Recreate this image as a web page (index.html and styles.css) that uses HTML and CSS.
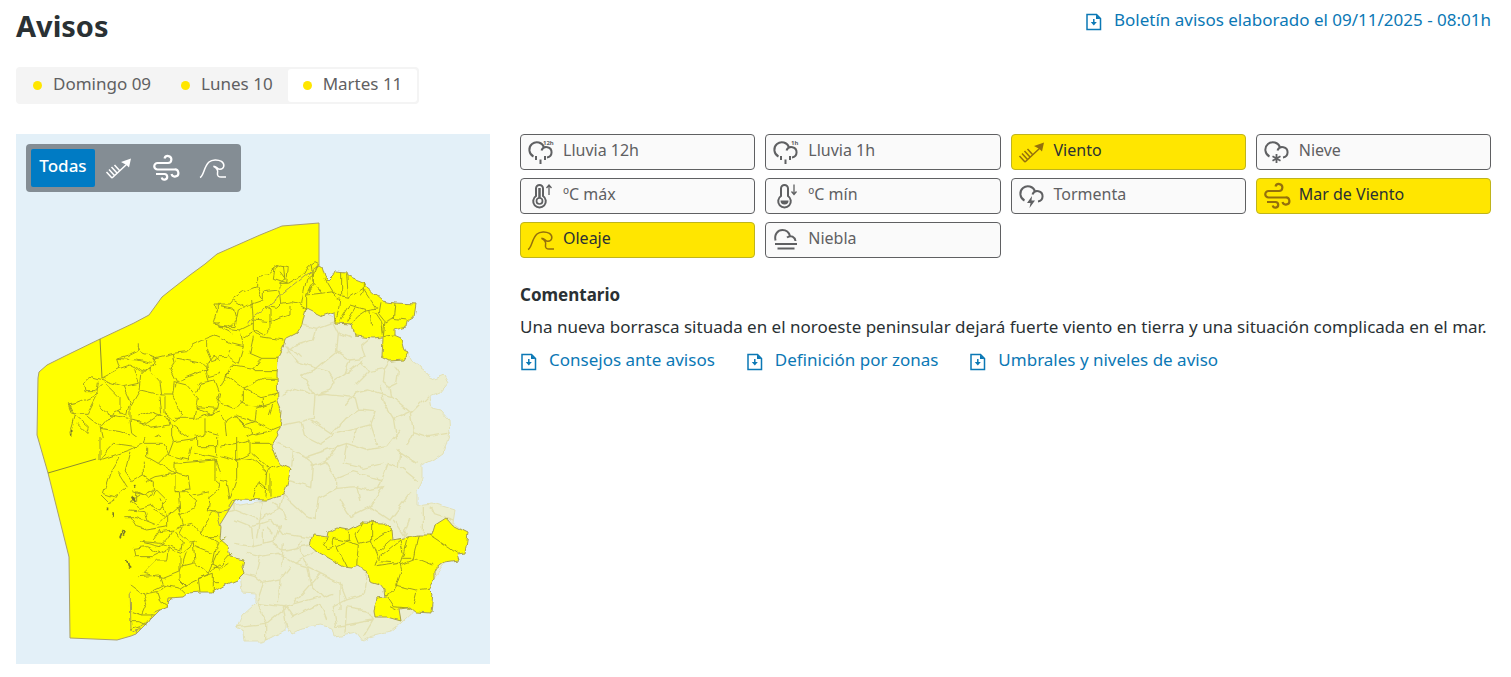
FILE: index.html
```html
<!DOCTYPE html>
<html lang="es">
<head>
<meta charset="utf-8">
<meta name="viewport" content="width=device-width, initial-scale=1">
<title>Avisos</title>
<link rel="stylesheet" href="styles.css">
</head>
<body>
<svg class="sprite" aria-hidden="true">
  <symbol id="i-doc" viewBox="0 0 18 18"><path d="M2 1.500h9.500l4 4v11H2z" fill="none" stroke="currentColor" stroke-width="1.500"/><path d="M11 1.500v4.500h4.500z" fill="currentColor"/><path d="M8.800 6v4" stroke="currentColor" stroke-width="1.500"/><path d="M5.800 9h6l-3 3.500z" fill="currentColor"/></symbol>
  <symbol id="i-cloud" viewBox="0 0 28 28"><path d="M6.500 18.500A7.500 7.500 0 1 1 17 9.500M14.500 12.500A5.200 5.200 0 1 1 20 19.500" fill="none" stroke="currentColor" stroke-width="2"/></symbol>
  <symbol id="i-rain" viewBox="0 0 28 28"><use href="#i-cloud"/><path d="M9 18v4M13.500 21.500v4.500M18 18v4" stroke="currentColor" stroke-width="2"/></symbol>
  <symbol id="i-snow" viewBox="0 0 28 28"><use href="#i-cloud"/><path d="M13.500 16v9M9.500 18.300l8 4.400M17.500 18.300l-8 4.400" stroke="currentColor" stroke-width="1.800"/></symbol>
  <symbol id="i-storm" viewBox="0 0 28 28"><use href="#i-cloud"/><path d="M14 14l-5 7h3.500l-1 5 5.500-7.500h-3.500z" fill="currentColor"/></symbol>
  <symbol id="i-tmax" viewBox="0 0 28 28"><path d="M9 14V6.500a3.500 3.500 0 0 1 7 0V14a6.300 6.300 0 1 1-7 0z" fill="none" stroke="currentColor" stroke-width="2"/><circle cx="12.500" cy="19" r="3" fill="none" stroke="currentColor" stroke-width="1.700"/><path d="M12.500 6v10" stroke="currentColor" stroke-width="2.500"/><path d="M22 13V3.500M19.500 6l2.500-3L24.500 6" fill="none" stroke="currentColor" stroke-width="1.300"/></symbol>
  <symbol id="i-tmin" viewBox="0 0 28 28"><path d="M9 14V6.500a3.500 3.500 0 0 1 7 0V14a6.300 6.300 0 1 1-7 0z" fill="none" stroke="currentColor" stroke-width="2"/><path d="M8.500 18.500h8a4 4 0 0 1-8 0z" fill="currentColor"/><path d="M22 2.500V12M19.500 9.500l2.500 3L24.500 9.500" fill="none" stroke="currentColor" stroke-width="1.300"/></symbol>
  <symbol id="i-fog" viewBox="0 0 28 28"><path d="M3.500 14.500C2 8 6 4 10.500 4c3.500 0 6.500 2.500 7.500 6M15 11.500c4-3 8-.5 8.500 3.500" fill="none" stroke="currentColor" stroke-width="2"/><path d="M3 18h22M5.500 22.500h17" stroke="currentColor" stroke-width="2"/></symbol>
  <symbol id="i-wind" viewBox="0 0 28 28"><path d="M7 24L22 10M7 24l-5.500-6M9.500 21.500L4 15.500M12 19l-5.500-6M14.500 16.500L9.500 11" fill="none" stroke="currentColor" stroke-width="1.500"/><path d="M26 4.500l-2 9-2.500-2.500-5.500-3z" fill="currentColor"/></symbol>
  <symbol id="i-sea" viewBox="0 0 28 28"><path d="M12.500 4.500a3.500 3.500 0 1 1 3.500 4.500H5.500a3 3 0 0 0 0 6.500H22.500a3.500 3.500 0 1 1-3 4.500M4 20h8.500a2.800 2.800 0 1 1-2.800 3.500" fill="none" stroke="currentColor" stroke-width="2.200"/></symbol>
  <symbol id="i-wave" viewBox="0 0 28 28"><path d="M1 23.500C5 22 4.500 13 10 8c3-2.700 9-2.700 12.500-.7 4 3 2.500 8-1.500 8-3 0-3-3-6.500-3 3 1.500 5 3.500 4 7-.5 3 1.500 3.700 3.500 3.700h5" fill="none" stroke="currentColor" stroke-width="1.500"/></symbol>
</svg>

<header class="page-head">
  <h1>Avisos</h1>
  <a class="doc-link" href="#boletin"><svg aria-hidden="true"><use href="#i-doc"/></svg>Boletín avisos elaborado el 09/11/2025 - 08:01h</a>
</header>

<nav class="days" aria-label="Días">
  <button type="button"><i class="dot"></i>Domingo 09</button>
  <button type="button"><i class="dot"></i>Lunes 10</button>
  <button type="button" class="active" aria-pressed="true"><i class="dot"></i>Martes 11</button>
</nav>

<main class="content">
  <section class="map" aria-label="Mapa de avisos">
    <svg class="map-drawing" viewBox="16 134 474 530" role="img" aria-label="Mapa de Galicia">
      <defs>
        <filter id="rough" x="-5%" y="-5%" width="110%" height="110%"><feTurbulence type="fractalNoise" baseFrequency=".13" numOctaves="1" seed="4"/><feDisplacementMap in="SourceGraphic" scale="6" xChannelSelector="R" yChannelSelector="G"/></filter>
        <clipPath id="nw"><path d="M0 0H600V666H0z"/></clipPath>
        <clipPath id="ne"><path d="M60 0H810V666H60z"/></clipPath>
        <clipPath id="sw"><path d="M0 21H600V690H0z"/></clipPath>
        <clipPath id="se"><path d="M60 21H870V690H60z"/></clipPath>
      </defs>
      <g filter="url(#rough)">
        <path class="land" d="M308 305L340 320 408 352 412 362 427 372 432 380 445 375 449 382 440 393 430 397 432 408 440 410 449 420 450 435 450 433 443 453 433 460 422 465 422 478 417 490 417 505 433 503 455 510 453 523 467 533 440 570 428 589 425 600 401 623 390 632 370 637 363 641 357 633 335 637 333 628 320 625 303 628 292 634 285 622 285 630 272 637 262 642 245 642 244 632 237 627 242 615 255 603 255 593 242 592 240 575 215 540 210 510 270 500 270 370 285 330z"/>
        <g class="beige" transform="translate(200 215) scale(.3333)"><path d="M305 330l45 10 55-20M350 340l-10 35-50 15-30 25M400 325l15 30 40 15M415 355l-5 55-60 50-60-20-30-40 30 10 15 15M410 410l40 25 45-5-10-40 35-30M350 460l-45 20 20 30 20 30 45-15 15-25-20-30-35-10M450 435l-15 40-30 20M435 475l50-35 20 30-40 40M505 470l50-10 20-30M555 460l-5 40 20 15 20-10 5-35-15-20M570 515l5 30 60 50 50-50M575 545l-70-20-40 10-30 35M245 540l40-20 60 20M345 540l-5 70-40 10-50 10M345 540l30-5 90 10 10 40-40 25-40 45-60-40M475 585l50 5-15 40-40 10-10 40M510 630l20 60M540 510l10 50 30 50 50-20M580 610l10 60M630 590l10 60 45 15 60-10M640 650l-20 40M300 620l10 40 50 25 45-30M410 655l60-15"/></g>
        <g class="beige" transform="translate(200 430) scale(.3333)"><path d="M230 40l50 20 40 20 60-20 60-20 60 20 60-10 40-50M280 60l-5 50M320 80l20 30-5 60-75-20M335 110l40-15 35 50 0 30-55 30-10 65M375 95l40-50M440 40l-10 60 60 15 60-15M410 145l50-20 85 25 20-50 30 10 5-50M410 175l60-5 30 10 50-10-40 60-60 30-30-50M470 165l10 50M545 150l-10 25M510 230l60 40 60-80M600 110l50 40M590 60l60 40M350 270l-30-10-70-65M250 195l-10 40-60 30-10 60M60 250l45-10 75 30M105 240l0-30M105 270l50 20 60-20 30 40 90 15M155 290l5 60-60-10M180 265l10-50M160 350l60-15 20-50M215 340l40 20 75-15M140 370l40 10 55-10 50 30 65-40M180 380l-15 60 25 20 50-10 30-40M130 430l35 10M240 450l-5 70M285 400l35 10 10 50M320 410l40 20 60 30 0 80M360 430l-80 90M420 460l20 50 50-15 10-70M440 510l-40 20 10 60M330 460l40 40 30-10M190 460l-20 60 80 10 110-30M200 580l60-50 20 30 80-40 20 50M170 520l30 60 0 50M250 530l10 60M110 590l90-10M440 530l-5 80M440 530l60 10 20 30-30 50M410 590l110-20M580 270l30 45 20-50M600 330l20-20M670 230l0 80M690 230l10 20 60 20M310 330l-30 30M190 300l0 40M220 220l30 20 10 30M200 290l20 20M250 340l-5 70M300 355l20 50"/></g>
      </g>
      <path class="sea" d="M319 223L282 226 260 235 217 254 205 264 190 275 172 289 162 297 149 315 134 323 100 339 63 357 47 365 39 372 38 378 37 435 48 473 69 557 70 638 117 640 131 636 136 634 180 590 235 500 260 360 306 310 319 265z"/>
      <g filter="url(#rough)">
        <path class="warn" d="M319 265L322 267 325 277 328 280 333 275 335 271 347 272 348 276 363 282 367 288 382 301 395 303 416 304 414 317 407 321 406 327 394 330 394 335 401 338 404 350 408 352 403 360 390 361 382 357 383 337 373 338 355 336 352 324 335 323 334 312 322 316 306 308 302 325 297 333 285 339 283 348 278 358 277 375 278 402 282 412 280 428 277 432 278 435 272 445 277 458 280 464 291 469 286 488 283 495 267 500 240 499 232 502 227 510 217 512 221 527 220 540 228 547 230 557 244 560 242 567 244 573 237 580 225 585 213 592 200 592 188 593 183 597 168 598 167 607 153 613 147 622 137 630 136 634 131 631 130 585 140 578 158 570 150 500 250 320z"/>
        <path class="mask" d="M140 560L150 500 245 330 250 340 170 560 133 583z"/>
        <path class="warn" d="M310 545L313 535 328 537 329 532 337 528 348 530 363 522 383 523 392 530 393 540 408 537 418 535 432 535 435 525 446 518 452 525 468 533 465 553 457 554 459 560 445 562 435 570 435 578 428 589 433 594 431 613 417 612 411 607 399 609 401 621 387 617 375 617 374 610 377 598 385 597 384 590 380 585 370 582 367 570 357 565 352 567 343 566 318 552z"/>
        <g class="lines" transform="translate(20 215) scale(.3333)"><path clip-path="url(#nw)" d="M355 385l0 20-30 15-35 10 10 30 30-10 40 20 30-20 5-25-35-10-15-20M400 430l60-15 40-5 20-20 40-20 25-10 25 10 5 30-10 30-30 10-15-35 0-30M290 430l60 5 45 10M460 415l5 25-15 20 20 40 75-30 20-5-20-20-75-15M385 460l35 40 5 40-65-15 5-45 25-25M340 460l15 45-45 10-60-20-35-10-25 20 5 25 30 0 20-20M245 490l55-30M235 500l-5 40-60 25-25 5 10 25 50 0 30-60M250 500l50 50 0 35-30 15-35-30M310 515l20 45-10 40-30-10M360 525l-30 50 0 40 50 10 45-30-5-50M330 615l5 40 40 30 40-25 40 30M145 565l20 40-15 50 5 30M165 600l40 35-5 20-30-30M200 600l45 35 30-35 50 10M240 635l10 45M355 600l35-10 55 20 5 20-60 10-30-20M425 540l30 0 30 60-20 20-30-25 0-50M455 540l5-40 40 10 35 40-10 60-60 0M530 530l10-25 45-10 15 40-10 45-55-5M470 500l-5 15M555 470l10 30M585 420l-25 30 5 35 35-10 10-25-30-30M600 470l30-20 15 40-35 20-10-35M610 510l55 10 5 60-35 5-45-30 5-20M595 285l0-20 10 0M580 325l50-5 25 25M530 610l80-25 60 10 50 0M555 610l0 50-45 10-55-40 0 40M610 590l10 30 50 30 50-40M555 650l40 10 30 0 40 30M240 640l60 10 30 10M525 575l50 25 15-20"/></g>
        <g class="lines" transform="translate(200 215) scale(.3333)"><path clip-path="url(#ne)" d="M100 250l30-20 40-15 0-30 30-5 25-20 15-10 25 5-5 50-20 0 15-15-15-20M225 160l-5 30 45 15 50-30 10-20 20-15 10 5-10 25-25 20-15 75M170 215l20 40-60 20-30-20M190 255l0-25 50-5 5 40-15 15-35-5M240 220l0-20M245 265l30-5 20 5 25 15M155 255l5 60 50 5 0-35-15-10M210 320l0 20-20 20-30-15 0-30M210 320l60-20 0-30M50 270l50 10 10 35-20 20-35 0 0-35M55 330l50 5 10-50 20-10M80 340l40 5 40-20M120 345l10 50-40-10-20-10-25-10-5 30 10 30 30 0 10-20M130 370l30-20 20 15 70 10M160 365l-10 50 35 15 50 0M130 395l-15 50-30-20M185 430l-25 30-60-10-15 10-20 50-20 10-20-70M160 460l5 10 70 0M105 450l-30 30 55 40 60-30 40 0M130 520l0 45-30 15-50-20 0-50M130 520l50 25 50-10M190 545l0 30-50-5-20-10M230 560l-60 20-5 40-60-20-30 20-20-30-50-5M165 620l-30 10-30-30M165 620l50 25 25-10M205 600l10-30M75 620l5 50M100 600l65 60 50-10M130 690l0-20 50-20M340 160l-5 35 30 40 35-5 25 15 0-75M365 235l-45 5 0 40M340 195l-20 45M425 245l20 5 45-30 40 60-30 5-50-15-30 50M445 250l-5-75M420 250l-5 40-10 30M490 200l0 30-10 15M470 270l-30 50M500 285l-30 20-20 25M510 285l5 50M525 290l20 30 5 40M540 265l-5 30 20 25 25-10 5-45M580 310l40 5M555 320l-5 45 30-5M375 190l30 50 10 15M330 150l10 60-15 20M250 150l5 45"/><path d="M100 255l-10 12-25 0-20 0 5 20-10 35 25 10 5 10 30 15"/></g>
        <g class="lines" transform="translate(20 430) scale(.3333)"><path clip-path="url(#sw)" d="M210 0l30 20 0 70M240 90l60-20 30-10 40-20 10-40M240 90l40-50 70 10M370 40l60 0 15 30-30 30-35-20 0-30M300 80l-30 50-20 60 30 10 40-30-25-40M330 65l-15 60 20 30 35-20 0-40M370 135l30 20 0 30-30 10-30-10M415 100l50 30-60 10-30 15M465 130l0-30 60-5 60-5 20 50-10 40-25 20-5 40 40 5M465 130l40 10 5 40-45 5 0-50M465 185l30 0 35 30-10 20-40 20-5-70M570 185l-50 10M585 90l0 60 45 40M240 195l30 30 20-30M360 195l-30 20 30 20 40-10M350 215l0-30 40 20 20-25 30 30-20 30-30-15M310 260l40 0 60 25 30-30-20-50M330 260l20 30 30 10 60-10 0-30-40-20M330 240l45 5 10 30M440 260l35-30 15 55-35 20M475 290l40-10 35 40 50 0M490 290l-10 20 30 30 20-5M540 310l30-50 20-20M420 305l40-5 30 40-5 20-60-20-60-5M400 330l20-30M360 335l60 15 20-20 20-30M345 380l-5-25 40-5 40 20M345 380l50 0 50-25 40 15 35-30M445 355l-5 35-30 0-40 40 60 15 50-20 20-60M480 380l0 70 20 20M520 340l5 55-40 10M525 395l40 35 30-70 40-20M565 320l30 20M525 350l50 20M565 430l50-40 30-20M570 430l-60 30-30 20M355 440l65-5 10 30-60 30-40-30M430 465l50 10 20 20M540 485l-5-40 45-15 0 55M580 455l70 0M370 490l10 30-15 35-30-10M380 490l30-5 10 30 20 15M410 485l30-15M365 555l40 0M330 575l30 0 20 10M330 600l30-10M530 0l0 50 60 0 0 30M450 0l10 35 70-10M460 35l-15 40 60 15 10-40M590 50l0-30 50 0 20 30 60-10M520 70l70 15M595 15l-10-15"/><path d="M620 320l-35 35-10 50 20 10 40-45M595 420l30-20"/><path class="islets" d="M335 200l5 10 0-10 5 15M340 165l5 8M300 325l10-25 5 5-5 15M320 390l5 20 5 5M275 250l5 8M260 235h5M155 0v20"/></g>
        <g class="lines" transform="translate(200 430) scale(.3333)"><path clip-path="url(#se)" d="M20 20l10 30 20 0 60-10 40-10 0 40-40 20-60-15 0-25M110 90l0-70 40-10 60 10M155 40l60 0M155 70l50 45-10 20M110 90l45-5 45 40-5 75M240 103l-35 15M210 130l0 70M160 205l15-50 30 25M110 85l0 60-20 60M30 145l50 10 10 50M385 322l-15 20 10 15 20-5 0-25M400 325l45 10 0-30M445 335l-35 15 30 60M445 335l30 10-5 60M475 340l40-10 20 50-10 30M490 275l-25 40 10 25M515 280l0 50M525 330l50-30M535 365l40-35M540 390l0-10 60-50 10 40-10 30-60-5M625 320l-15 65 30 0 15-70M600 405l50-20 50 20M530 410l70-10 5 20-20 60-30 15M585 465l60 15 40-5M650 485l-10 40M560 500l20 30 50 5M690 315l60 40 20 15M570 530l20 10"/></g>
      </g>
      <path class="seaborder" d="M100 339l2 39M48 473l48-14"/>
    </svg>
    <div class="map-tools">
      <button type="button" class="all">Todas</button>
      <button type="button" aria-label="Viento"><svg><use href="#i-wind"/></svg></button>
      <button type="button" aria-label="Mar de Viento"><svg><use href="#i-sea"/></svg></button>
      <button type="button" aria-label="Oleaje"><svg><use href="#i-wave"/></svg></button>
    </div>
  </section>

  <section class="details">
    <div class="types">
      <button type="button"><svg viewBox="0 0 28 28"><use href="#i-rain"/><text x="16" y="7" class="tiny">12h</text></svg>Lluvia 12h</button>
      <button type="button"><svg viewBox="0 0 28 28"><use href="#i-rain"/><text x="19" y="7" class="tiny">1h</text></svg>Lluvia 1h</button>
      <button type="button" class="on"><svg><use href="#i-wind"/></svg>Viento</button>
      <button type="button"><svg><use href="#i-snow"/></svg>Nieve</button>
      <button type="button"><svg><use href="#i-tmax"/></svg>ºC máx</button>
      <button type="button"><svg><use href="#i-tmin"/></svg>ºC mín</button>
      <button type="button"><svg><use href="#i-storm"/></svg>Tormenta</button>
      <button type="button" class="on"><svg><use href="#i-sea"/></svg>Mar de Viento</button>
      <button type="button" class="on"><svg><use href="#i-wave"/></svg>Oleaje</button>
      <button type="button"><svg><use href="#i-fog"/></svg>Niebla</button>
    </div>
    <h2>Comentario</h2>
    <p>Una nueva borrasca situada en el noroeste peninsular dejará fuerte viento en tierra y una situación complicada en el mar.</p>
    <div class="links">
      <a class="doc-link" href="#consejos"><svg aria-hidden="true"><use href="#i-doc"/></svg>Consejos ante avisos</a>
      <a class="doc-link" href="#zonas"><svg aria-hidden="true"><use href="#i-doc"/></svg>Definición por zonas</a>
      <a class="doc-link" href="#umbrales"><svg aria-hidden="true"><use href="#i-doc"/></svg>Umbrales y niveles de aviso</a>
    </div>
  </section>
</main>
</body>
</html>
```
FILE: styles.css
```css
* { box-sizing: border-box; }
body {
  margin: 0;
  padding: 8px 20px 12px 16px;
  background: #fff;
  color: #2a3134;
  font: 17px/24px "Noto Sans", "Open Sans", sans-serif;
}
button { font: inherit; color: inherit; border: 0; background: none; padding: 0; cursor: pointer; }
.sprite { position: absolute; width: 0; height: 0; }
.tiny { font: bold 6px "Noto Sans", sans-serif; fill: currentColor; }

.page-head { display: flex; justify-content: space-between; align-items: flex-start; }
h1 { margin: 0; font-size: 29px; line-height: 36px; font-weight: 700; }
.doc-link { display: inline-flex; align-items: center; gap: 11px; color: #0b78b5; text-decoration: none; }
.doc-link svg { width: 18px; height: 18px; margin-top: 4px; }

.days { display: inline-flex; margin-top: 23px; padding: 2px; background: #f4f4f4; border-radius: 4px; color: #5f6062; }
.days button { display: flex; align-items: center; gap: 11px; height: 33px; padding: 0 15px 4px; border-radius: 3px; }
.days .active { background: #fff; }
.dot { width: 9px; height: 9px; margin-top: 4px; border-radius: 50%; background: #ffe600; }

.content { display: grid; grid-template-columns: 474fr 971fr; gap: 30px; align-items: start; margin-top: 30px; }
.map { position: relative; background: #e3f0f8; }
.map-drawing { display: block; width: 100%; height: auto; }
.map-tools { position: absolute; top: 10px; left: 10px; display: flex; align-items: center; padding: 5px; border-radius: 4px; background: #848d94; color: #fff; }
.map-tools button { display: flex; align-items: center; justify-content: center; width: 47px; height: 38px; }
.map-tools svg { width: 28px; height: 28px; }
.map-tools .all { width: 64px; padding-bottom: 4px; border-radius: 2px; background: #007bc4; font-weight: 500; }

.land { fill: #eceed0; stroke: #e3e1b8; stroke-width: 1; }
.beige { fill: none; stroke: #e2dfae; stroke-width: 4; }
.sea { fill: #ff0; stroke: #aaa06a; stroke-width: 1; }
.warn { fill: #ff0; stroke: #a8a050; stroke-width: 1; }
.mask { fill: #ff0; stroke: #ff0; stroke-width: 12; }
.lines { fill: none; stroke: #a3a31e; stroke-width: 3; stroke-linejoin: round; }
.islets { stroke: #77772a; stroke-width: 5; }
.seaborder { fill: none; stroke: #8c8c30; stroke-width: 1; }

.types { display: grid; grid-template-columns: repeat(4, minmax(0, 1fr)); gap: 8px 10px; }
.types button { display: flex; align-items: center; gap: 8px; height: 36px; padding: 0 6px 4px; border: 1px solid #5f6062; border-radius: 4px; background: #fafafa; color: #5f6062; font-size: 16px; text-align: left; }
.types svg { flex: none; width: 28px; height: 28px; margin-top: 4px; }
.types .on { background: #ffe600; border-color: #bfb41c; color: #2a3134; }
.types .on svg { color: #94700c; }

h2 { margin: 25px 0 8px; font-size: 17px; line-height: 24px; font-weight: 700; }
p { margin: 0 0 9px; }
.links { display: flex; flex-wrap: wrap; gap: 8px 31px; }
```
